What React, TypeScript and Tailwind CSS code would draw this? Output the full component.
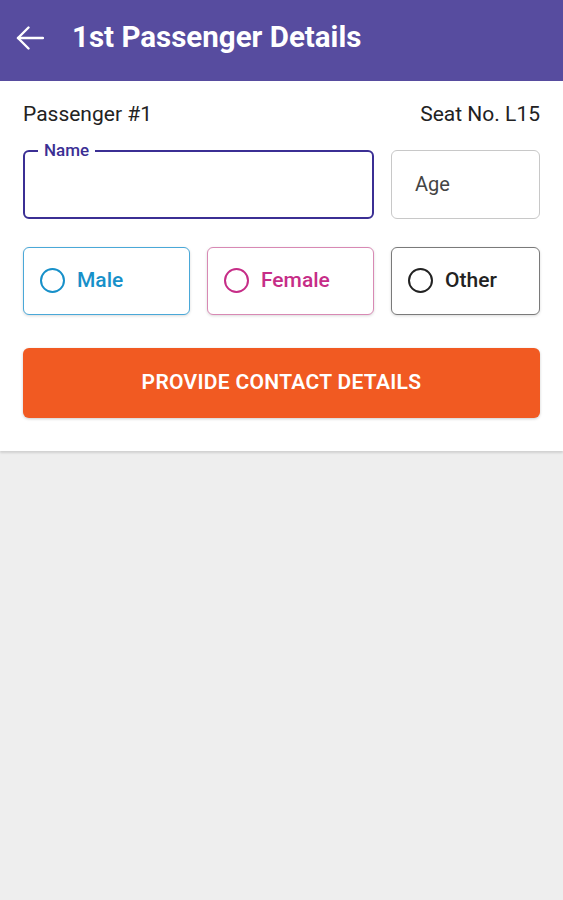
// Passenger details form — first passenger

type Gender = {
    label: string;
    box: string;
    text: string;
    ring: string;
};

const GENDERS: Gender[] = [
    { label: 'Male', box: 'border-[#4aa8d8]', text: 'text-[#1790c9]', ring: 'border-[#1790c9]' },
    { label: 'Female', box: 'border-[#d889b4]', text: 'text-[#c62d87]', ring: 'border-[#c62d87]' },
    { label: 'Other', box: 'border-[#7a7a7a]', text: 'text-[#222222]', ring: 'border-[#222222]' },
];

function BackArrow() {
    return (
        <svg width="28" height="24" viewBox="0 0 28 24" fill="none" stroke="currentColor" strokeWidth="2.4" strokeLinecap="round" strokeLinejoin="round">
            <path d="M27 12H2" />
            <path d="M12.5 1.5 2 12l10.5 10.5" />
        </svg>
    );
}

function GenderOption({ gender }: { gender: Gender }) {
    return (
        <div
            className={`flex h-[68px] items-center gap-[12px] rounded-[6px] border bg-white pl-[16px] shadow-[0_1px_3px_rgba(0,0,0,0.15)] ${gender.box}`}
        >
            <span className={`h-[25px] w-[25px] rounded-full border-2 ${gender.ring}`} />
            <span className={`text-[21px] font-medium ${gender.text}`}>{gender.label}</span>
        </div>
    );
}

export default function App() {
    return (
        <div className="flex min-h-[900px] flex-col bg-[#eeeeee] font-['Roboto',sans-serif]">
            {/* 상단 앱바 */}
            <header className="flex h-[81px] items-center bg-[#574c9f] pb-[6px] pl-[16px] text-white">
                <BackArrow />
                <h1 className="ml-[28px] text-[29.5px] font-bold">1st Passenger Details</h1>
            </header>

            <section className="bg-white px-[23px] pt-[18px] pb-[33px] shadow-[0_2px_2px_rgba(0,0,0,0.12)]">
                <div className="flex items-center justify-between text-[21px] text-[#222222]">
                    <span>Passenger #1</span>
                    <span>Seat No. L15</span>
                </div>

                {/* 이름 + 나이 */}
                <div className="mt-[19px] flex gap-[17px]">
                    <div className="relative h-[69px] w-[351px] rounded-[6px] border-2 border-[#3b2f94]">
                        <span className="absolute -top-[12px] left-[13px] bg-white px-[6px] text-[17px] leading-[20px] font-medium text-[#3b2f94]">
                            Name
                        </span>
                    </div>
                    <div className="flex h-[69px] flex-1 items-center rounded-[6px] border border-[#c8c8c8] pl-[23px] text-[20px] text-[#444444]">
                        Age
                    </div>
                </div>

                {/* 성별 선택 */}
                <div className="mt-[28px] grid grid-cols-[167px_167px_1fr] gap-[17px]">
                    {GENDERS.map((g) => (
                        <GenderOption key={g.label} gender={g} />
                    ))}
                </div>

                <button className="mt-[33px] flex h-[70px] w-full items-center justify-center rounded-[6px] bg-[#f15a22] text-[21px] font-semibold tracking-[0.3px] text-white shadow-[0_1px_3px_rgba(0,0,0,0.2)]">
                    PROVIDE CONTACT DETAILS
                </button>
            </section>
        </div>
    );
}
